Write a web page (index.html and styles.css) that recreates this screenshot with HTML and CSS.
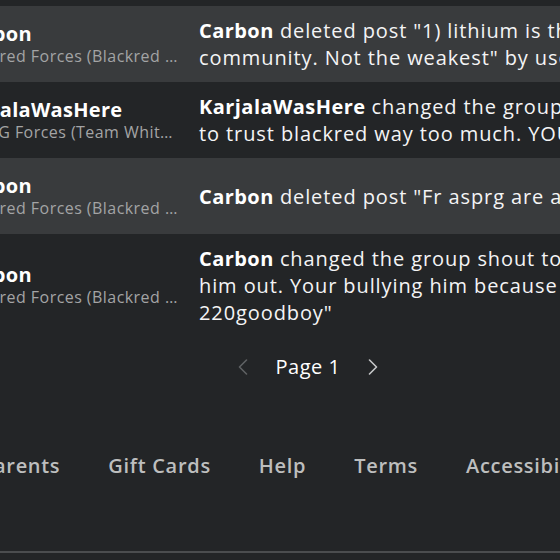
FILE: index.html
```html
<!DOCTYPE html>
<html lang="en">
<head>
<meta charset="utf-8">
<title>Audit Log</title>
<link rel="stylesheet" href="styles.css">
</head>
<body>
<div class="page">
  <div class="log">
    <div class="row alt">
      <div class="user">
        <div class="avatar"></div>
        <div class="info">
          <div class="name">Carbon</div>
          <div class="group">Blackred Forces (Blackred Forces)</div>
        </div>
      </div>
      <div class="desc"><b>Carbon</b> deleted post "1) lithium is the strongest in this<br>community. Not the weakest" by user asprg_fan.</div>
    </div>
    <div class="row">
      <div class="user">
        <div class="avatar"></div>
        <div class="info">
          <div class="name">KarjalaWasHere</div>
          <div class="group">ASPRG Forces (Team White Army)</div>
        </div>
      </div>
      <div class="desc"><b>KarjalaWasHere</b> changed the group shout to "Stop trying<br>to trust blackred way too much. YOU will regret it."</div>
    </div>
    <div class="row alt">
      <div class="user">
        <div class="avatar"></div>
        <div class="info">
          <div class="name">Carbon</div>
          <div class="group">Blackred Forces (Blackred Forces)</div>
        </div>
      </div>
      <div class="desc"><b>Carbon</b> deleted post "Fr asprg are a joke" by user asprg_fan.</div>
    </div>
    <div class="row">
      <div class="user">
        <div class="avatar"></div>
        <div class="info">
          <div class="name">Carbon</div>
          <div class="group">Blackred Forces (Blackred Forces)</div>
        </div>
      </div>
      <div class="desc"><b>Carbon</b> changed the group shout to "Stop trying to kick<br>him out. Your bullying him because of nothing @<br>220goodboy"</div>
    </div>
  </div>

  <div class="pager">
    <span class="chev disabled">
      <svg width="10" height="16" viewBox="0 0 10 16"><polyline points="8.5,1 1.5,8 8.5,15" fill="none" stroke="currentColor" stroke-width="1.6" stroke-linecap="round" stroke-linejoin="round"/></svg>
    </span>
    <span class="page-label">Page 1</span>
    <span class="chev">
      <svg width="10" height="16" viewBox="0 0 10 16"><polyline points="1.5,1 8.5,8 1.5,15" fill="none" stroke="currentColor" stroke-width="1.6" stroke-linecap="round" stroke-linejoin="round"/></svg>
    </span>
  </div>

  <footer class="footer">
    <nav class="links">
      <a>Parents</a>
      <a>Gift Cards</a>
      <a>Help</a>
      <a>Terms</a>
      <a>Accessibility</a>
      <a>Privacy</a>
    </nav>
    <div class="divider"></div>
  </footer>
</div>
</body>
</html>
```

FILE: styles.css
```css
html, body {
  margin: 0;
  padding: 0;
}

body {
  background: #232527;
  color: #f7f7f8;
  font-family: "Open Sans", "Noto Sans", sans-serif;
  overflow: hidden;
}

.page {
  margin-left: -120px;
  width: 852px;
  padding-top: 6px;
}

.log {
  display: flex;
  flex-direction: column;
}

.row {
  display: flex;
  align-items: center;
  gap: 21px;
  padding: 11px 0;
}

.row.alt {
  background: #393b3d;
}

.user {
  display: flex;
  align-items: center;
  gap: 24px;
  width: 298px;
  flex: none;
}

.avatar {
  width: 54px;
  height: 54px;
  border-radius: 50%;
  background: #4a4c4e;
  flex: none;
}

.info {
  min-width: 0;
  flex: 1;
}

.name {
  font-size: 20px;
  line-height: 24px;
  font-weight: 700;
  color: #ffffff;
  letter-spacing: 0.3px;
  white-space: nowrap;
}

.group {
  font-size: 16px;
  line-height: 21px;
  color: #a3a4a5;
  letter-spacing: 0.45px;
  white-space: nowrap;
  overflow: hidden;
  text-overflow: ellipsis;
}

.desc {
  font-size: 20px;
  line-height: 27px;
  letter-spacing: 0.9px;
  white-space: nowrap;
  color: #f4f4f5;
}

.desc b {
  font-weight: 700;
  color: #ffffff;
  letter-spacing: 0.45px;
}

.pager {
  display: flex;
  justify-content: center;
  align-items: center;
  gap: 28px;
  margin-top: 16px;
  padding-left: 4px;
}

.page-label {
  font-size: 20px;
  line-height: 27px;
  font-weight: 500;
  color: #ffffff;
  letter-spacing: 0.5px;
}

.chev {
  display: flex;
  color: #c6c7c8;
}

.chev.disabled {
  color: #5f6163;
}

.footer {
  margin-top: 72px;
}

.links {
  display: flex;
  gap: 48px;
  padding-left: 101px;
  white-space: nowrap;
}

.links a {
  font-size: 20px;
  line-height: 27px;
  font-weight: 600;
  color: #bdbebe;
  letter-spacing: 0.7px;
}

.divider {
  margin-top: 72px;
  height: 2px;
  background: #4b4d4f;
}
```
